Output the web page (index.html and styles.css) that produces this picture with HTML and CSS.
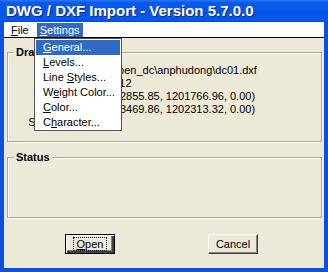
FILE: index.html
```
<!DOCTYPE html>
<html>
<head>
<meta charset="utf-8">
<link rel="stylesheet" href="styles.css">
</head>
<body>
<div class="window">
  <div class="titlebar">DWG / DXF Import - Version 5.7.0.0</div>
  <div class="frame">
    <div class="menubar">
      <span class="mb-item mb-file"><u>F</u>ile</span>
      <span class="mb-item mb-settings active"><u>S</u>ettings</span>
    </div>
    <div class="client">
      <div class="group group-info">
        <span class="group-title">Drawing info</span>
        <div class="rows">
          <span class="lbl">File name:</span><span class="val">C:\ben_dc\anphudong\dc01.dxf</span>
          <span class="lbl">Version:</span><span class="val">AC12</span>
          <span class="lbl">Min point:</span><span class="val">(562855.85, 1201766.96, 0.00)</span>
          <span class="lbl">Max point:</span><span class="val">(563469.86, 1202313.32, 0.00)</span>
          <span class="lbl">Selected item:</span><span class="val">0</span>
        </div>
      </div>
      <div class="group group-status">
        <span class="group-title">Status</span>
      </div>
      <div class="buttons">
        <button class="btn btn-default"><span class="focus"><u>O</u>pen</span></button>
        <button class="btn">Cancel</button>
      </div>
    </div>
  </div>
  <div class="dropdown">
    <div class="dd-item active"><u>G</u>eneral...</div>
    <div class="dd-item"><u>L</u>evels...</div>
    <div class="dd-item">Line <u>S</u>tyles...</div>
    <div class="dd-item">W<u>e</u>ight Color...</div>
    <div class="dd-item"><u>C</u>olor...</div>
    <div class="dd-item">C<u>h</u>aracter...</div>
  </div>
</div>
</body>
</html>
```
FILE: styles.css
```
* { box-sizing: border-box; }
html, body { margin: 0; padding: 0; }
body {
  width: 328px;
  height: 272px;
  overflow: hidden;
  font-family: "Liberation Sans", Arial, sans-serif;
  font-size: 11px;
  color: #000;
}
.window {
  position: relative;
  width: 328px;
  height: 272px;
  background: #0a50e2;
  display: flex;
  flex-direction: column;
}
.titlebar {
  height: 22px;
  flex: none;
  background: linear-gradient(to bottom, #2a78f5 0%, #0a5aea 12%, #0654e6 60%, #0858ec 90%, #0846d8 100%);
  color: #fff;
  font: bold 15px "Liberation Sans", Arial, sans-serif;
  line-height: 22px;
  padding-left: 6px;
  text-shadow: 1px 1px 0 #0b2a8a;
  white-space: nowrap;
}
.frame {
  flex: 1;
  display: flex;
  flex-direction: column;
  padding: 0 4px 4px 4px;
}
.menubar {
  height: 16px;
  flex: none;
  background: #fff;
  border-bottom: 1px solid #000;
  display: flex;
  align-items: flex-start;
}
.mb-item {
  height: 14px;
  line-height: 14px;
  margin-top: 1px;
  padding: 0 3px;
}
.mb-file { margin-left: 4px; }
.mb-settings { margin-left: 5px; }
.mb-item.active { background: #316ac5; color: #fff; }
.client {
  flex: 1;
  background: #ece9d8;
  padding: 14px 1px 0 3px;
  display: flex;
  flex-direction: column;
}
.group {
  position: relative;
  border: 1px solid #aca899;
  box-shadow: inset 1px 1px 0 #fff, 1px 1px 0 #fff;
  width: 315px;
}
.group-info { height: 90px; }
.group-status { height: 61px; margin-top: 15px; }
.group-title {
  position: absolute;
  top: -7px;
  left: 6px;
  padding: 0 2px;
  background: #ece9d8;
  font-weight: bold;
  line-height: 13px;
}
.rows {
  display: grid;
  grid-template-columns: 90px 1fr;
  column-gap: 6px;
  padding-top: 11px;
  line-height: 13px;
  white-space: nowrap;
}
.lbl { text-align: right; }
.buttons {
  margin-top: 16px;
  display: flex;
  padding-left: 58px;
  gap: 93px;
}
.btn {
  width: 50px;
  height: 20px;
  padding: 0;
  background: #ece9d8;
  font: 11px "Liberation Sans", Arial, sans-serif;
  color: #000;
  border: 1px solid;
  border-color: #fff #404040 #404040 #fff;
  box-shadow: inset -1px -1px 0 #808080;
}
.btn-default {
  border: 1px solid #000;
  box-shadow: inset 1px 1px 0 #fff, inset -2px -2px 0 #404040, inset -3px -3px 0 #808080;
}
.focus {
  display: inline-block;
  outline: 1px dotted #000;
  padding: 0 3px;
  line-height: 12px;
}
.dropdown {
  position: absolute;
  left: 34px;
  top: 38px;
  width: 88px;
  height: 93px;
  background: #fff;
  border: 1px solid #555;
  padding: 1px;
}
.dd-item {
  height: 15px;
  line-height: 15px;
  padding-left: 7px;
  white-space: nowrap;
}
.dd-item.active { background: #316ac5; color: #fff; }
```
